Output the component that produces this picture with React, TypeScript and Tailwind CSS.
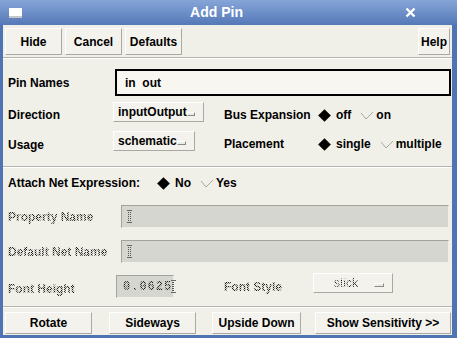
import React from 'react';

const font = { fontFamily: '"Liberation Sans", Arial, sans-serif' };

const Btn = ({ label, className = '' }: { label: string; className?: string }) => (
  <div className={`flex items-center justify-center whitespace-nowrap bg-[#f3f2ec] border border-t-white border-l-white border-b-[#a9a9a3] border-r-[#a9a9a3] text-[12px] font-bold text-black ${className}`}>
    {label}
  </div>
);

const Drop = ({ label, className = '', disabled = false }: { label: string; className?: string; disabled?: boolean }) => (
  <div className={`flex items-center pl-1 pr-2 bg-[#f3f2ec] border border-t-white border-l-white border-b-[#a9a9a3] border-r-[#a9a9a3] text-[12px] font-bold ${disabled ? 'justify-end gap-[16px]' : 'justify-between text-black'} ${className}`}>
    {disabled ? <Dim className="font-normal">{label}</Dim> : <span>{label}</span>}
    <span className="w-[10px] h-[4px] mt-[4px] border border-t-white border-l-white border-b-[#8a8a85] border-r-[#8a8a85] bg-[#ecebe4]" />
  </div>
);

const On = ({ label }: { label: string }) => (
  <div className="flex items-center gap-[5px]">
    <span className="w-[13px] h-[13px] flex items-center justify-center">
      <span className="w-[9px] h-[9px] rotate-45 bg-black" />
    </span>
    <span>{label}</span>
  </div>
);

const Off = ({ label }: { label: string }) => (
  <div className="flex items-center gap-[2px] ml-[9px]">
    <svg width="14" height="10" viewBox="0 0 14 10">
      <polyline points="1,3 6,9 13,2" fill="none" stroke="#a8a8a2" strokeWidth="1" />
    </svg>
    <span>{label}</span>
  </div>
);

const Sep = ({ className = '' }: { className?: string }) => (
  <div className={`h-[2px] border-t border-t-[#b4b4ae] border-b border-b-white ${className}`} />
);

// X11 style stippled text for insensitive widgets
const Dim = ({ children, className = '' }: { children: React.ReactNode; className?: string }) => (
  <span className={`whitespace-nowrap text-[12px] font-bold text-transparent bg-clip-text bg-[repeating-conic-gradient(#1e1e1b_0_25%,#d8d7d0_0_50%)] bg-[length:2px_2px] ${className}`}>
    {children}
  </span>
);

const Field = ({ className = '', text }: { className?: string; text?: string }) => (
  <div className={`flex items-center pl-[6px] bg-[#d6d6d1] border border-t-[#a3a39e] border-l-[#a3a39e] border-b-[#efeee8] border-r-[#efeee8] ${className}`}>
    {text && (
      <span className="text-[12px] tracking-[1px] font-mono text-transparent bg-clip-text bg-[repeating-conic-gradient(#1e1e1b_0_25%,#c4c4bf_0_50%)] bg-[length:2px_2px]">
        {text}
      </span>
    )}
    <span className="w-[3px] h-[13px] border-x border-dotted border-[#555] border-y-0 relative">
      <span className="absolute left-[-2px] top-0 w-[5px] h-[1px] bg-[#666]" />
      <span className="absolute left-[-2px] bottom-0 w-[5px] h-[1px] bg-[#666]" />
    </span>
  </div>
);

export default function App() {
  return (
    <div className="w-[457px] h-[338px] flex flex-col bg-[#4f74b4] overflow-hidden" style={font}>
      <div className="h-[25px] flex items-center px-[9px] bg-gradient-to-b from-[#86a5d8] to-[#5579b8]">
        <div className="w-[13px] h-[10px] bg-white border-b-2 border-[#c6c6c6]" />
        <div className="flex-1 text-center text-white font-bold text-[14px] pl-[6px]">Add Pin</div>
        <svg width="11" height="11" viewBox="0 0 11 11" className="mr-[32px]">
          <path d="M1.5 1.5 L9.5 9.5 M9.5 1.5 L1.5 9.5" stroke="white" strokeWidth="2.4" />
        </svg>
      </div>
      <div className="flex-1 flex flex-col ml-[3px] mr-[5px] mb-[3px] bg-[#f0efe8] text-black text-[12px] font-bold whitespace-nowrap">
        <div className="flex gap-[3px] pl-[2px] pr-[2px] pt-[3px] h-[30px]">
          <Btn label="Hide" className="w-[57px]" />
          <Btn label="Cancel" className="w-[57px]" />
          <Btn label="Defaults" className="w-[57px]" />
          <div className="flex-1" />
          <Btn label="Help" className="w-[32px]" />
        </div>
        <Sep className="mt-[2px]" />
        <div className="flex items-center mt-[10px] h-[27px]">
          <span className="w-[112px] pl-[5px] pt-[1px]">Pin Names</span>
          <div className="w-[336px] h-[27px] border-2 border-black flex items-center pl-[8px] bg-[#f7f6f0]">in&nbsp;&nbsp;out</div>
        </div>
        <div className="flex items-center mt-[6px] h-[20px]">
          <span className="w-[110px] pl-[5px] pt-[6px]">Direction</span>
          <Drop label="inputOutput" className="w-[91px] h-[20px]" />
          <span className="w-[114px] pl-[20px] pt-[6px]">Bus Expansion</span>
          <div className="flex items-center pt-[6px]">
            <On label="off" />
            <Off label="on" />
          </div>
        </div>
        <div className="flex items-center mt-[9px] h-[20px]">
          <span className="w-[110px] pl-[5px] pt-[7px]">Usage</span>
          <Drop label="schematic" className="w-[82px] h-[20px]" />
          <span className="w-[123px] pl-[29px] pt-[6px]">Placement</span>
          <div className="flex items-center pt-[6px]">
            <On label="single" />
            <Off label="multiple" />
          </div>
        </div>
        <Sep className="mt-[15px]" />
        <div className="flex items-center mt-[8px] h-[14px] pl-[5px]">
          <span className="w-[149px]">Attach Net Expression:</span>
          <On label="No" />
          <Off label="Yes" />
        </div>
        <div className="flex items-center mt-[15px] h-[23px]">
          <Dim className="w-[118px] pl-[5px]">Property Name</Dim>
          <Field className="w-[328px] h-[23px]" />
        </div>
        <div className="flex items-center mt-[12px] h-[23px]">
          <Dim className="w-[118px] pl-[5px]">Default Net Name</Dim>
          <Field className="w-[328px] h-[23px]" />
        </div>
        <div className="flex items-start mt-[10px] h-[25px]">
          <Dim className="w-[113px] pl-[5px] pt-[7px]">Font Height</Dim>
          <Field className="w-[58px] h-[23px] mt-[2px]" text="0.0625" />
          <Dim className="w-[139px] pl-[50px] pt-[5px]">Font Style</Dim>
          <Drop label="stick" disabled className="w-[80px] h-[20px]" />
        </div>
        <Sep className="mt-[8px]" />
        <div className="flex items-center mt-[4px] h-[22px] pl-[2px]">
          <Btn label="Rotate" className="w-[87px] h-[22px]" />
          <Btn label="Sideways" className="w-[87px] h-[22px] ml-[17px]" />
          <Btn label="Upside Down" className="w-[89px] h-[22px] ml-[16px]" />
          <Btn label="Show Sensitivity >>" className="w-[136px] h-[22px] ml-[14px]" />
        </div>
      </div>
    </div>
  );
}
